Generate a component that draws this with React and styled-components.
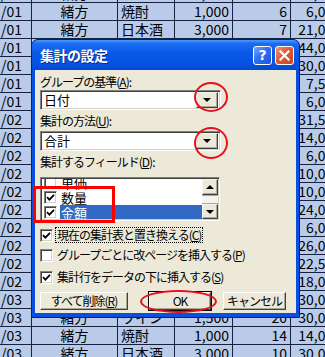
import styled, { createGlobalStyle } from 'styled-components';

const GlobalStyle = createGlobalStyle`
  html, body {
    margin: 0;
    padding: 0;
  }
  body {
    width: 325px;
    height: 357px;
    overflow: hidden;
    background: #b9cbe8;
    font-family: "Noto Sans CJK JP", "Liberation Sans", sans-serif;
  }
`;

const Page = styled.div`
  position: relative;
  width: 325px;
  height: 357px;
  overflow: hidden;
  background: #b9cbe8;
`;

// ---- spreadsheet behind the dialog ----

const Sheet = styled.div`
  margin-top: -15px;
  margin-left: -2px;
  display: grid;
  grid-template-columns: 34px 86px 57px 58px 58px 54px;
  grid-auto-rows: 18px;
`;

const Cell = styled.div`
  box-sizing: border-box;
  border-right: 1px solid #14213f;
  border-bottom: 1px solid #14213f;
  font-size: 14px;
  line-height: 17px;
  color: #000;
  white-space: nowrap;
  overflow: hidden;
  padding: 0 3px;
  text-align: ${p => p.$align || 'left'};
`;

const rows = [
  ['/01', '緒方', 'ワイン', '1,500', '4', '6,000'],
  ['/01', '緒方', '焼酎', '1,000', '6', '6,000'],
  ['/01', '緒方', '日本酒', '3,000', '7', '21,000'],
  ['/01', '緒方', 'ワイン', '1,500', '20', '44,000'],
  ['/01', '緒方', '焼酎', '1,000', '30', '30,000'],
  ['/01', '緒方', 'ワイン', '1,500', '5', '7,500'],
  ['/01', '緒方', '焼酎', '1,000', '6', '6,000'],
  ['/02', '緒方', 'ワイン', '1,500', '21', '31,500'],
  ['/02', '緒方', '焼酎', '1,000', '14', '14,000'],
  ['/02', '緒方', '焼酎', '1,000', '6', '6,000'],
  ['/02', '緒方', '焼酎', '1,000', '10', '10,000'],
  ['/02', '緒方', '焼酎', '1,000', '10', '10,000'],
  ['/02', '緒方', '日本酒', '3,000', '8', '24,000'],
  ['/02', '緒方', '焼酎', '1,000', '6', '6,000'],
  ['/02', '緒方', '日本酒', '3,000', '9', '26,000'],
  ['/02', '緒方', 'ワイン', '1,500', '15', '22,500'],
  ['/02', '緒方', '日本酒', '3,000', '6', '18,000'],
  ['/03', '緒方', '日本酒', '3,000', '10', '30,000'],
  ['/03', '緒方', 'ワイン', '1,500', '20', '30,000'],
  ['/03', '緒方', '焼酎', '1,000', '14', '14,000'],
  ['/03', '緒方', '日本酒', '3,000', '10', '30,000'],
];

const aligns = ['left', 'center', 'left', 'right', 'right', 'right'];

// cells hidden completely under the dialog stay empty
const hidden = (i, j) => i >= 3 && i <= 17 && j >= 1 && j <= 4;

// ---- dialog ----

const Window = styled.div`
  position: absolute;
  left: 31px;
  top: 39px;
  width: 269px;
  height: 279px;
  box-sizing: border-box;
  display: flex;
  flex-direction: column;
  border-radius: 7px 7px 0 0;
  background: #0a4fe0;
  border: 1px solid #0019a0;
  padding: 0 3px 4px 3px;
`;

const TitleBar = styled.div`
  height: 30px;
  margin: 0 -3px;
  padding: 0 5px 0 8px;
  display: flex;
  align-items: center;
  border-radius: 6px 6px 0 0;
  background: linear-gradient(#4a9bff 0%, #1b6cf2 12%, #0858e8 45%, #0552e3 80%, #0447cf 100%);
`;

const Title = styled.div`
  flex: 1;
  color: #fff;
  font-size: 14px;
  font-weight: bold;
  letter-spacing: -0.5px;
  text-shadow: 1px 1px 0 #0a2a90;
`;

const CapButton = styled.div`
  width: 19px;
  height: 19px;
  box-sizing: border-box;
  margin-left: 3px;
  border: 1px solid #fff;
  border-radius: 3px;
  display: flex;
  align-items: center;
  justify-content: center;
  color: #fff;
  font-family: "DejaVu Sans", sans-serif;
  font-weight: bold;
  font-size: 14px;
  background: ${p => (p.$close
    ? 'linear-gradient(135deg, #f19474 0%, #e25a34 45%, #c9431e 100%)'
    : 'linear-gradient(135deg, #78a6f8 0%, #2f6ef0 45%, #1d55d8 100%)')};
`;

const Client = styled.div`
  flex: 1;
  background: #ece9d8;
  padding: 5px 5px 0 5px;
  display: flex;
  flex-direction: column;
  font-size: 12px;
  letter-spacing: -1px;
  color: #000;
`;

const Label = styled.div`
  line-height: 14px;
  margin-top: ${p => p.$mt || 0}px;
  white-space: nowrap;
`;

const sunken = `
  box-sizing: border-box;
  background: #fff;
  border-top: 1px solid #808080;
  border-left: 1px solid #808080;
  border-right: 1px solid #fff;
  border-bottom: 1px solid #fff;
  box-shadow: inset 1px 1px 0 #404040, inset -1px -1px 0 #d4d0c8;
`;

const Combo = styled.div`
  ${sunken}
  width: 181px;
  height: 20px;
  margin-top: ${p => p.$mt || 0}px;
  display: flex;
  align-items: center;
  padding: 2px;
`;

const ComboText = styled.div`
  flex: 1;
  padding-left: 1px;
  font-size: 13px;
  letter-spacing: 0;
  line-height: 16px;
`;

const ArrowButton = styled.div`
  box-sizing: border-box;
  width: ${p => p.$w || 22}px;
  height: ${p => p.$h || 16}px;
  flex: none;
  background: #ece9d8;
  border-top: 1px solid #f4f3ee;
  border-left: 1px solid #f4f3ee;
  border-right: 1px solid #404040;
  border-bottom: 1px solid #404040;
  box-shadow: inset -1px -1px 0 #aca899;
  display: flex;
  align-items: center;
  justify-content: center;
`;

const Triangle = styled.div`
  width: 0;
  height: 0;
  border-left: 4px solid transparent;
  border-right: 4px solid transparent;
  ${p => (p.$up ? 'border-bottom: 4px solid #000;' : 'border-top: 4px solid #000;')}
`;

const ListBox = styled.div`
  ${sunken}
  width: 180px;
  height: 44px;
  margin-top: 8px;
  padding: 1px;
  display: flex;
  overflow: hidden;
`;

const ListItems = styled.div`
  flex: 1;
  overflow: hidden;
  padding-left: 1px;
`;

const ListInner = styled.div`
  margin-top: -4px;
`;

const ListRow = styled.div`
  height: 15px;
  display: flex;
  align-items: center;
  padding-left: 1px;
`;

const ListText = styled.div`
  flex: 1;
  height: 15px;
  margin-left: 3px;
  padding-left: 1px;
  font-size: 13px;
  letter-spacing: 0;
  line-height: 15px;
  color: ${p => (p.$selected ? '#fff' : '#000')};
  background: ${p => (p.$selected ? '#316ac5' : 'transparent')};
`;

const ScrollBar = styled.div`
  width: 16px;
  display: flex;
  flex-direction: column;
`;

const ScrollTrack = styled.div`
  flex: 1;
  background: #f4f3ee;
  border-top: 1px solid #aca899;
  border-bottom: 1px solid #aca899;
`;

const Box = styled.div`
  box-sizing: border-box;
  width: 13px;
  height: 13px;
  flex: none;
  background: #fff;
  border-top: 1px solid #808080;
  border-left: 1px solid #808080;
  border-right: 1px solid #fff;
  border-bottom: 1px solid #fff;
  box-shadow: inset 1px 1px 0 #404040, inset -1px -1px 0 #d4d0c8;
  display: flex;
  align-items: center;
  justify-content: center;
`;

const CheckRow = styled.div`
  display: flex;
  align-items: center;
  height: 16px;
  margin-top: ${p => p.$mt || 0}px;
  white-space: nowrap;
`;

const CheckLabel = styled.div`
  margin-left: 3px;
  line-height: 14px;
  padding: 0 1px;
  outline: ${p => (p.$focus ? '1px dotted #000' : 'none')};
`;

const Buttons = styled.div`
  display: flex;
  margin-top: 7px;
`;

const Button = styled.div`
  box-sizing: border-box;
  width: ${p => p.$w}px;
  height: 18px;
  margin-left: ${p => p.$ml || 0}px;
  background: #ece9d8;
  border-top: 1px solid #fff;
  border-left: 1px solid #fff;
  border-right: 1px solid #404040;
  border-bottom: 1px solid #404040;
  box-shadow: inset -1px -1px 0 #aca899 ${p => (p.$default ? ', 0 0 0 1px #000' : '')};
  display: flex;
  align-items: center;
  justify-content: center;
  line-height: 14px;
`;

// ---- red annotations drawn over the screenshot ----

const Ellipse = styled.div`
  position: absolute;
  box-sizing: border-box;
  border: 2px solid #e8101a;
  border-radius: 50%;
  pointer-events: none;
`;

const Frame = styled.div`
  position: absolute;
  box-sizing: border-box;
  border: 3px solid #f00;
  pointer-events: none;
`;

const Check = () => (
  <svg width="9" height="9" viewBox="0 0 9 9">
    <path d="M1 4.2 L3.4 6.6 L8 1.8" stroke="#000" strokeWidth="1.8" fill="none" />
  </svg>
);

const CloseGlyph = () => (
  <svg width="11" height="11" viewBox="0 0 11 11">
    <path d="M1.5 1.5 L9.5 9.5 M9.5 1.5 L1.5 9.5" stroke="#fff" strokeWidth="2.2" strokeLinecap="square" />
  </svg>
);

export default function App() {
  return (
    <Page>
      <GlobalStyle />
      <Sheet>
        {rows.map((r, i) => r.map((v, j) => (
          <Cell key={`${i}-${j}`} $align={aligns[j]}>{hidden(i, j) ? '' : v}</Cell>
        )))}
      </Sheet>

      <Window>
        <TitleBar>
          <Title>集計の設定</Title>
          <CapButton>?</CapButton>
          <CapButton $close><CloseGlyph /></CapButton>
        </TitleBar>
        <Client>
          <Label>グループの基準(<u>A</u>):</Label>
          <Combo $mt={1}>
            <ComboText>日付</ComboText>
            <ArrowButton><Triangle /></ArrowButton>
          </Combo>

          <Label $mt={4}>集計の方法(<u>U</u>):</Label>
          <Combo $mt={3}>
            <ComboText>合計</ComboText>
            <ArrowButton><Triangle /></ArrowButton>
          </Combo>

          <Label $mt={4}>集計するフィールド(<u>D</u>):</Label>
          <ListBox>
            <ListItems>
              <ListInner>
                <ListRow><Box /><ListText>単価</ListText></ListRow>
                <ListRow><Box><Check /></Box><ListText>数量</ListText></ListRow>
                <ListRow><Box><Check /></Box><ListText $selected>金額</ListText></ListRow>
              </ListInner>
            </ListItems>
            <ScrollBar>
              <ArrowButton $w={16} $h={16}><Triangle $up /></ArrowButton>
              <ScrollTrack />
              <ArrowButton $w={16} $h={15}><Triangle /></ArrowButton>
            </ScrollBar>
          </ListBox>

          <CheckRow $mt={6}>
            <Box><Check /></Box>
            <CheckLabel $focus>現在の集計表と置き換える(<u>C</u>)</CheckLabel>
          </CheckRow>
          <CheckRow $mt={4}>
            <Box />
            <CheckLabel>グループごとに改ページを挿入する(<u>P</u>)</CheckLabel>
          </CheckRow>
          <CheckRow $mt={6}>
            <Box><Check /></Box>
            <CheckLabel>集計行をデータの下に挿入する(<u>S</u>)</CheckLabel>
          </CheckRow>

          <Buttons>
            <Button $w={88}>すべて削除(<u>R</u>)</Button>
            <Button $w={62} $ml={21} $default>OK</Button>
            <Button $w={63} $ml={12}>キャンセル</Button>
          </Buttons>
        </Client>
      </Window>

      <Ellipse style={{ left: 194, top: 82, width: 34, height: 30 }} />
      <Ellipse style={{ left: 194, top: 127, width: 34, height: 32 }} />
      <Frame style={{ left: 33, top: 186, width: 82, height: 37 }} />
      <Ellipse style={{ left: 140, top: 290, width: 77, height: 23 }} />
    </Page>
  );
}
